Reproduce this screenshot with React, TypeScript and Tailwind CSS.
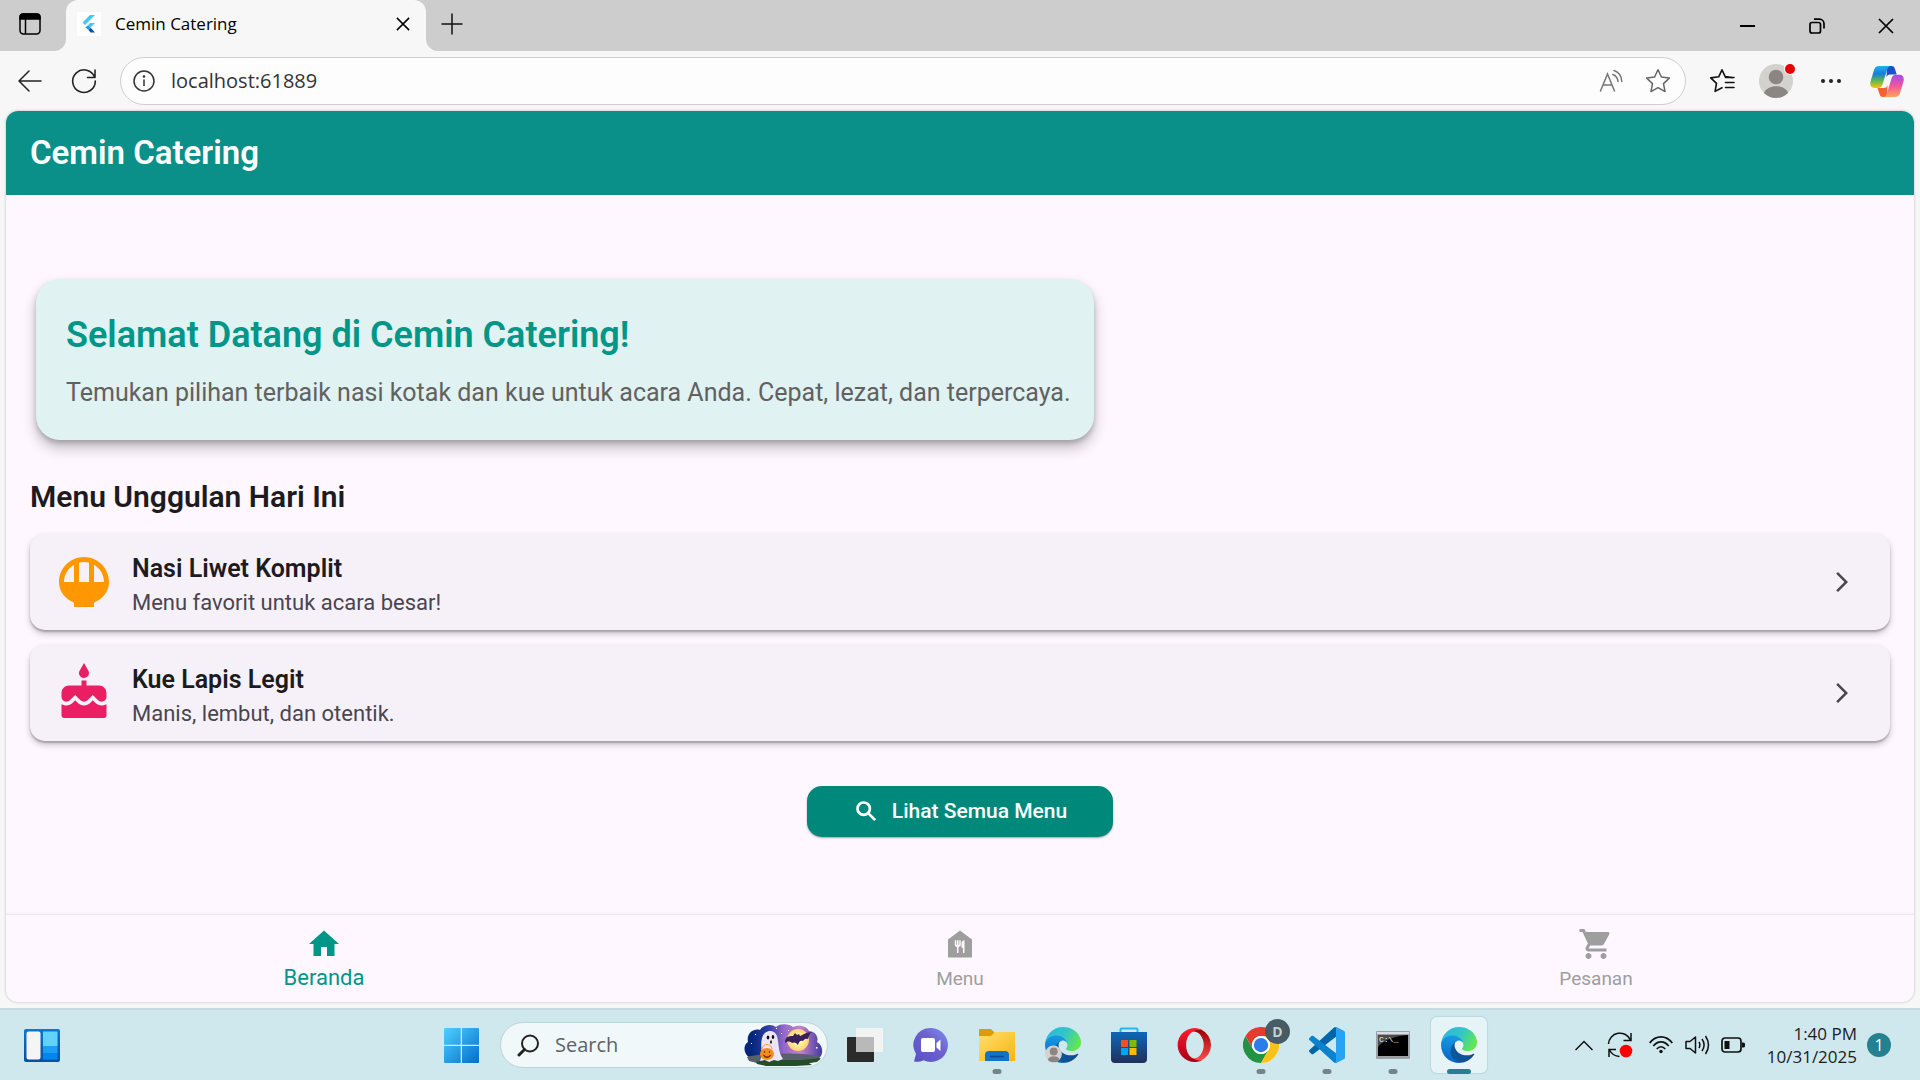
import type { ReactNode } from "react";
import {
  MdArrowForwardIos,
  MdCake,
  MdFoodBank,
  MdHome,
  MdRiceBowl,
  MdShoppingCart,
} from "react-icons/md";

const uiFont = "font-['Open_Sans','Noto_Sans',sans-serif]";

/* ---------- Browser icons ---------- */

function TabActionsIcon() {
  return (
    <svg width="24" height="24" viewBox="0 0 24 24" fill="none" stroke="#000" strokeWidth="1.5">
      <rect x="2" y="2" width="20" height="20" rx="3.5" />
      <path d="M2 7V5a3 3 0 0 1 3-3h14a3 3 0 0 1 3 3v2z" fill="#000" />
      <path d="M7.5 7v15" />
    </svg>
  );
}

function FlutterIcon() {
  return (
    <svg width="24" height="24" viewBox="0 0 24 24">
      <path fill="#fff" d="M0 0h24v24H0z" />
      <path fill="#47c5fb" d="M13 3h5L8 13l-2.500-2.500z" />
      <path fill="#47c5fb" d="M13 11h5l-4.500 4.500-2.500-2.300z" />
      <path fill="#2196e8" d="M11 13.200l2.500 2.300L11.500 18 8.500 15.500z" />
      <path fill="#00569e" d="M11.500 18l2.200-2.300L18 20.500h-4.500z" />
    </svg>
  );
}

function CrossIcon({ size }: { size: number }) {
  return (
    <svg width={size} height={size} viewBox="0 0 16 16" stroke="#000" strokeWidth="1.7" fill="none">
      <path d="M1 1l14 14M15 1L1 15" />
    </svg>
  );
}

function PlusIcon() {
  return (
    <svg width="22" height="22" viewBox="0 0 22 22" stroke="#111" strokeWidth="1.5" fill="none">
      <path d="M11 .5v21M.5 11h21" />
    </svg>
  );
}

function RestoreIcon() {
  return (
    <svg width="16" height="16" viewBox="0 0 16 16" stroke="#000" strokeWidth="1.700" fill="none">
      <rect x="1" y="4.500" width="10.500" height="10.500" rx="2" />
      <path d="M5 1.200h5.500a4.500 4.500 0 0 1 4.500 4.500V10.500" />
    </svg>
  );
}

function BackIcon() {
  return (
    <svg width="24" height="22" viewBox="0 0 24 22" stroke="#222" strokeWidth="1.500" fill="none" strokeLinecap="round" strokeLinejoin="round">
      <path d="M23 11H1M11 1L1 11l10 10" />
    </svg>
  );
}

function ReloadIcon() {
  return (
    <svg width="26" height="26" viewBox="0 0 26 26" stroke="#222" strokeWidth="1.600" fill="none" strokeLinecap="round" strokeLinejoin="round">
      <path d="M23.700 9.500A11.300 11.300 0 1 0 24.300 13M24 2v7.500h-7.500" />
    </svg>
  );
}

function InfoIcon() {
  return (
    <svg width="22" height="22" viewBox="0 0 22 22" stroke="#333" strokeWidth="1.500" fill="none">
      <circle cx="11" cy="11" r="10" />
      <path d="M11 9.500v6.500" />
      <circle cx="11" cy="6.500" r=".6" fill="#333" />
    </svg>
  );
}

function ReadAloudIcon() {
  return (
    <svg width="24" height="24" viewBox="0 0 24 24" stroke="#767676" strokeWidth="1.500" fill="none" strokeLinecap="round">
      <path d="M1.500 22L8.500 5l7 17M4 16h9M15 1.500c4.500 1.500 7.500 6 7.800 11M13.800 5.500c3 1 4.800 3.500 5.200 7" />
    </svg>
  );
}

function StarIcon() {
  return (
    <svg width="26" height="26" viewBox="0 0 26 26" stroke="#666" strokeWidth="1.500" fill="none" strokeLinejoin="round">
      <path d="M13 1.800l3.400 7.200 7.900 1.100-5.800 5.500 1.500 8L13 19.700l-7 3.900 1.500-8-5.800-5.500L9.600 9z" />
    </svg>
  );
}

function FavoritesIcon() {
  return (
    <svg width="26" height="26" viewBox="0 0 26 26" stroke="#111" strokeWidth="1.600" fill="none" strokeLinejoin="round" strokeLinecap="round">
      <path d="M23.500 9.600l-7.300-1L13 1.800 9.700 8.800l-8 1.100 5.800 5.500-1.400 8L13 19.700M16.500 9.500H25M16.500 14.500H25M16.500 19.500H25" />
    </svg>
  );
}

function CopilotIcon() {
  return (
    <svg width="34" height="31" viewBox="0 0 34 31">
      <defs>
        <linearGradient id="copL" x1="0" y1="0" x2="0" y2="1">
          <stop offset="0" stopColor="#1ab4f0" />
          <stop offset=".35" stopColor="#157fd6" />
          <stop offset=".7" stopColor="#6cb84a" />
          <stop offset="1" stopColor="#fdc600" />
        </linearGradient>
        <linearGradient id="copR" x1="0" y1="0" x2="0" y2="1">
          <stop offset="0" stopColor="#a349f0" />
          <stop offset=".5" stopColor="#f0569a" />
          <stop offset="1" stopColor="#ffa45c" />
        </linearGradient>
      </defs>
      <path fill="#1e4fd0" d="M17 0h4.500c2 0 3 1.200 3.500 3l1.700 5.500H20c-2 0-3 1-3.500 3z" />
      <path fill="#f4632f" d="M17 31h-4c-2 0-3-1.200-3.500-3L7.500 22H14c2 0 3-1 3.500-3z" />
      <path fill="url(#copL)" d="M9 0h12c-2.500 0-3.300 2-4 4l-4.500 14.500c-.7 2.300-1.800 3.500-4.500 3.500H4.500C1 22-.5 19 .5 15.500L4 4C4.800 1.300 6.300 0 9 0z" />
      <path fill="url(#copR)" d="M25 31H13c2.500 0 3.300-2 4-4l4.500-14.500C22.200 10.200 23.300 8.700 26 8.700h3.500C33 8.700 34.500 12 33.500 15.500L30 27c-.8 2.700-2.300 4-5 4z" />
    </svg>
  );
}

/* ---------- Taskbar icons ---------- */

function WidgetsIcon() {
  return (
    <svg width="36" height="33" viewBox="0 0 36 33">
      <defs>
        <linearGradient id="wid" x1="0" y1="0" x2="0" y2="1">
          <stop offset="0" stopColor="#0a79d0" />
          <stop offset="1" stopColor="#0b4ea2" />
        </linearGradient>
      </defs>
      <rect width="36" height="33" rx="2" fill="url(#wid)" />
      <rect x="2.500" y="2.500" width="14" height="28" rx="2" fill="#f5f5f5" />
      <path fill="#62d3ff" d="M19 2.500h14.500V17H19z" />
      <path fill="#1b9ff5" d="M19 17h14.500v7H19z" />
      <path fill="#0086f0" d="M19 24h14.500v6.500H19z" />
    </svg>
  );
}

function StartIcon() {
  return (
    <svg width="35" height="35" viewBox="0 0 35 35">
      <defs>
        <linearGradient id="win" x1="0" y1="0" x2="1" y2="1">
          <stop offset="0" stopColor="#4fd0ff" />
          <stop offset="1" stopColor="#006fcf" />
        </linearGradient>
      </defs>
      <path fill="url(#win)" d="M1 0h15.700v16.700H0V1a1 1 0 0 1 1-1zM18 0h16a1 1 0 0 1 1 1v15.700H18zM0 18h16.700v17H1a1 1 0 0 1-1-1zM18 18h17v16a1 1 0 0 1-1 1H18z" />
    </svg>
  );
}

function TaskSearchIcon() {
  return (
    <svg width="23" height="23" viewBox="0 0 23 23" stroke="#222" fill="none" strokeLinecap="round">
      <circle cx="13" cy="9.500" r="8" strokeWidth="2" />
      <path d="M7.500 15.500L2 21" strokeWidth="3" />
    </svg>
  );
}

function HalloweenArt() {
  return (
    <svg width="80" height="42" viewBox="0 0 80 42">
      <defs>
        <linearGradient id="sky" x1="0" y1="0" x2="1" y2="0">
          <stop offset=".1" stopColor="#04277c" />
          <stop offset=".3" stopColor="#2b3ea0" />
          <stop offset=".5" stopColor="#9166c8" />
          <stop offset=".72" stopColor="#c582ce" />
          <stop offset="1" stopColor="#3f3a9b" />
        </linearGradient>
        <radialGradient id="moon">
          <stop offset=".4" stopColor="#fff3a0" />
          <stop offset="1" stopColor="#ffcf70" />
        </radialGradient>
      </defs>
      <path fill="url(#sky)" d="M6 34C-1 30-1 21 4 18 2 9 10 4 16 6c4-6 12-6 16-3 5-4 13-3 17 0 8-3 14 0 16 4 6 0 10 6 8 11 6 3 7 12 2 16z" />
      <path fill="#56616a" d="M3 33c14-4 50-5 72-1l1 4-10 3H13L5 37z" />
      <path fill="#244d2c" d="M12 38l8-2h38l19-2-4 4-8 1 3 2-16 1H22l-9-2z" />
      <circle cx="54" cy="16" r="11" fill="url(#moon)" />
      <path fill="#38205f" d="M41 19c0-6 3-7 8-7l2-3 2 2 2-1 1 2c3-1 6-4 12-4-3 2-3 5-4 7-3-1-4 1-5 2-3-1-4 1-5 4-2-3-4-3-6-2-2-2-5-2-7 0z" />
      <path fill="#ece5fa" d="M16 37c3-8 0-15 2-23C20 6 30 4 33 12c2 7 1 16 6 23l-5 2-4-1-5 2-4-2z" />
      <ellipse cx="24" cy="13.500" rx="1.300" ry="1.900" fill="#111" />
      <ellipse cx="29" cy="13" rx="1.300" ry="1.900" fill="#111" />
      <ellipse cx="27" cy="18" rx="1" ry="1.700" fill="#222" />
      <path d="M18 25c1-6 9-6 10 0" stroke="#f79a2b" fill="none" />
      <ellipse cx="23" cy="30" rx="7" ry="6" fill="#f38a1d" />
      <path d="M20 28h1m4 0h1M19.500 31c2 3 5 3 7 0" stroke="#5c2500" strokeWidth="1.300" fill="none" />
      <path fill="#fff" d="M11 10h1v1h-1zM37 9h1v1h-1zM72 23h1.500v1.500H72zM32 4h1v1h-1zM7 19h1v1H7zM44 6h1v1h-1z" />
    </svg>
  );
}

function TaskViewIcon() {
  return (
    <svg width="36" height="36" viewBox="0 0 36 36">
      <rect y="10" width="27" height="25" rx="1" fill="#2b2b2b" />
      <rect x="9" y="1" width="27" height="24" rx="1" fill="#f3f3f3" />
      <path fill="#b9b9b9" d="M9 10h18v15H9z" />
    </svg>
  );
}

function ChatIcon() {
  return (
    <svg width="36" height="36" viewBox="0 0 36 36">
      <defs>
        <linearGradient id="chat" x1="0" y1="1" x2="1" y2="0">
          <stop offset="0" stopColor="#5a50c4" />
          <stop offset=".6" stopColor="#6f62cf" />
          <stop offset="1" stopColor="#7b93f0" />
        </linearGradient>
      </defs>
      <path fill="url(#chat)" d="M18 1a17 17 0 1 1-7.500 32.300C7 35 4 35 1 34.500L3 27A17 17 0 0 1 18 1z" />
      <rect x="8" y="11" width="14" height="14" rx="2" fill="#fff" />
      <path fill="#fff" d="M23.500 16l4-3.500V24l-4-3.500z" />
    </svg>
  );
}

function FolderIcon() {
  return (
    <svg width="36" height="36" viewBox="0 0 36 36">
      <defs>
        <linearGradient id="fold" x1="0" y1="0" x2="1" y2="1">
          <stop offset="0" stopColor="#ffdf70" />
          <stop offset="1" stopColor="#fbb50f" />
        </linearGradient>
      </defs>
      <path fill="#dd9b09" d="M1 2h11l4 4v3H0V3a1 1 0 0 1 1-1z" />
      <path fill="url(#fold)" d="M0 9h12l4-4h19a1 1 0 0 1 1 1v28H0z" />
      <path fill="#1273c8" d="M6 34V28a4 4 0 0 1 4-4h16a4 4 0 0 1 4 4v6z" />
      <path d="M11 29.500h14" stroke="#0a4a96" strokeWidth="1.500" />
    </svg>
  );
}

function EdgeIcon({ id, avatar }: { id: string; avatar?: boolean }) {
  return (
    <svg width="36" height="36" viewBox="0 0 256 256">
      <defs>
        <linearGradient id={id + "a"} x1="0" y1=".5" x2="1" y2=".5">
          <stop offset="0" stopColor="#0c59a4" />
          <stop offset="1" stopColor="#114a8b" />
        </linearGradient>
        <linearGradient id={id + "b"} x1=".6" y1="0" x2=".4" y2="1">
          <stop offset="0" stopColor="#1b9de2" />
          <stop offset=".5" stopColor="#0d84d9" />
          <stop offset="1" stopColor="#0b63bb" />
        </linearGradient>
        <linearGradient id={id + "c"} x1="0" y1=".2" x2="1" y2=".6">
          <stop offset="0" stopColor="#30b6e0" />
          <stop offset=".5" stopColor="#31c5c8" />
          <stop offset="1" stopColor="#66e84c" />
        </linearGradient>
      </defs>
      <g transform="translate(-4.6 -4.9)">
        <path fill={`url(#${id}a)`} d="M235.680,195.460a93.730,93.730,0,0,1-10.540,4.710,101.870,101.870,0,0,1-35.900,6.460c-47.320,0-88.540-32.550-88.540-74.320A31.480,31.480,0,0,1,117.130,105c-42.800,1.800-53.800,46.400-53.800,72.530,0,73.880,68.090,81.370,82.760,81.370,7.910,0,19.840-2.300,27-4.560l1.310-.44A128.340,128.340,0,0,0,241,201.100a4,4,0,0,0-5.320-5.640Z" />
        <path fill={`url(#${id}b)`} d="M110.340,246.340A79.200,79.200,0,0,1,87.600,225a80.720,80.720,0,0,1,29.530-120c3.120-1.470,8.450-4.130,15.540-4a32.350,32.350,0,0,1,25.690,13,31.880,31.880,0,0,1,6.360,18.660c0-.21,24.460-79.600-80-79.600-43.900,0-80,41.660-80,78.210a130.150,130.150,0,0,0,12.110,56,128,128,0,0,0,156.380,67.110,75.550,75.550,0,0,1-62.780-8Z" />
        <path fill={`url(#${id}c)`} d="M156.940,153.780c-.81,1.050-3.300,2.500-3.300,5.660,0,2.610,1.700,5.120,4.720,7.230,14.380,10,41.490,8.680,41.560,8.680a59.560,59.560,0,0,0,30.270-8.350A61.380,61.380,0,0,0,260.640,114.140c.26-22.410-8-37.310-11.340-43.910C228.100,28.760,182.350,4.920,132.630,4.920A128,128,0,0,0,4.630,131.120c.48-36.540,36.800-66.050,80-66.050,3.500,0,23.460.34,42,10.070,16.340,8.580,24.900,18.940,30.850,29.210,6.180,10.670,7.280,24.150,7.280,29.520S162,147.200,156.940,153.780Z" />
      </g>
      {avatar && (
        <g>
          <circle cx="60" cy="192" r="60" fill="#d4d2d0" />
          <circle cx="62" cy="174" r="28" fill="#8b8683" />
          <path d="M20 232c10-32 74-32 84 0-20 26-64 26-84 0z" fill="#8b8683" />
        </g>
      )}
    </svg>
  );
}

function StoreIcon() {
  return (
    <svg width="36" height="36" viewBox="0 0 36 36">
      <defs>
        <linearGradient id="store" x1="0" y1="0" x2="0" y2="1">
          <stop offset="0" stopColor="#0e68b8" />
          <stop offset="1" stopColor="#20305c" />
        </linearGradient>
      </defs>
      <path d="M9.500 8V2.500a1 1 0 0 1 1-1h15a1 1 0 0 1 1 1V8" stroke="#22b9f0" strokeWidth="2" fill="none" />
      <path fill="url(#store)" d="M0 5h36v27a4 4 0 0 1-4 4H4a4 4 0 0 1-4-4z" />
      <path fill="#f25022" d="M10 13h7v7h-7z" />
      <path fill="#7fba00" d="M18.500 13h7v7h-7z" />
      <path fill="#00a4ef" d="M10 21h7v7h-7z" />
      <path fill="#ffb900" d="M18.500 21h7v7h-7z" />
    </svg>
  );
}

function OperaIcon() {
  return (
    <svg width="36" height="36" viewBox="0 0 36 36">
      <defs>
        <linearGradient id="opA" x1="0" y1="0" x2="0" y2="1">
          <stop offset="0" stopColor="#ff1b2d" />
          <stop offset="1" stopColor="#a70014" />
        </linearGradient>
        <linearGradient id="opB" x1="0" y1="0" x2="0" y2="1">
          <stop offset="0" stopColor="#9c0000" />
          <stop offset="1" stopColor="#ff4b4b" />
        </linearGradient>
      </defs>
      <path fill="url(#opB)" d="M12 6c3-3 8-4 12-3.500A17 17 0 0 1 24 33.500c-5 1-9 0-12-3.500 3 2 8 2 11-1.500 5-6 5-15 0-21C20 4 15 3.500 12 6z" />
      <path fill="url(#opA)" fillRule="evenodd" d="M18 1a17 17 0 1 0 8.500 31.500c-3 1.500-7 1-9.500-.5C6.500 28 6.500 8 17 4c3-1.500 7-1.500 9.500-.5A17 17 0 0 0 18 1z" />
    </svg>
  );
}

function ChromeIcon() {
  return (
    <svg width="36" height="36" viewBox="0 0 48 48">
      <circle cx="24" cy="24" r="24" fill="#fff" />
      <path fill="#e33b2e" d="M3.200 12A24 24 0 0 1 44.800 12H24a12 12 0 0 0-10.400 18z" />
      <path fill="#229342" d="M3.200 12l10.400 18A12 12 0 0 0 34.400 30L24 48A24 24 0 0 1 3.200 12z" />
      <path fill="#fbc116" d="M44.800 12A24 24 0 0 1 24 48l10.400-18A12 12 0 0 0 24 12z" />
      <circle cx="24" cy="24" r="12" fill="#fff" />
      <circle cx="24" cy="24" r="9.500" fill="#2b7de9" />
    </svg>
  );
}

function CodeIcon() {
  return (
    <svg width="36" height="36" viewBox="0 0 100 100">
      <path fill="#0065a9" d="M96.460 10.800L75.860.880C73.470-.270 70.620.210 68.750 2.080L1.300 63.580C-.520 65.240-.510 68.090 1.300 69.750L6.810 74.750C8.300 76.100 10.530 76.200 12.130 74.990L93.360 13.370C96.090 11.300 100 13.250 100 16.670V16.430C100 14.030 98.620 11.840 96.460 10.800Z" />
      <path fill="#0a82cc" d="M96.460 89.200L75.860 99.120C73.470 100.270 70.620 99.790 68.750 97.920L1.300 36.420C-.520 34.760-.510 31.910 1.300 30.250L6.810 25.250C8.300 23.900 10.530 23.800 12.130 25.010L93.360 86.630C96.090 88.700 100 86.750 100 83.330V83.570C100 85.970 98.620 88.160 96.460 89.200Z" />
      <path fill="#27a3f3" d="M75.860 99.130C73.470 100.270 70.620 99.790 68.750 97.920C71.060 100.220 75 98.590 75 95.330V4.670C75 1.410 71.060-.220 68.750 2.080C70.620.210 73.470-.270 75.860.870L96.460 10.780C98.620 11.820 100 14.010 100 16.410V83.590C100 85.990 98.620 88.180 96.460 89.220Z" />
    </svg>
  );
}

function TerminalIcon() {
  return (
    <svg width="36" height="36" viewBox="0 0 36 36">
      <rect x="1" y="4" width="34" height="28" rx="1" fill="#9aa0a6" />
      <path fill="#d9dde0" d="M2 5h32v2H2z" />
      <path fill="#000" d="M3 8h30v21H3z" />
      <path fill="#4a4a4a" d="M3 8h30C20 9 8 13 3 20z" />
      <text x="4" y="15" fill="#fff" fontSize="8" fontFamily="Liberation Mono, monospace">C:\_</text>
    </svg>
  );
}

function ChevronUpIcon() {
  return (
    <svg width="18" height="11" viewBox="0 0 18 11" stroke="#111" strokeWidth="1.500" fill="none">
      <path d="M.500 10L9 1.500l8.500 8.500" />
    </svg>
  );
}

function SyncIcon() {
  return (
    <svg width="26" height="26" viewBox="0 0 26 26" stroke="#111" strokeWidth="1.500" fill="none">
      <path d="M1.500 12A11.500 11.500 0 0 1 23.500 8M24 1v7.500h-7.500M2 25v-7.500h7M2.500 18a12 12 0 0 0 10 6.500" />
      <circle cx="19" cy="19" r="6.300" fill="#f00" stroke="none" />
    </svg>
  );
}

function WifiIcon() {
  return (
    <svg width="24" height="20" viewBox="0 0 24 20" stroke="#111" strokeWidth="1.700" fill="none">
      <path d="M.700 8C7-.200 17-.200 23.300 8M4.300 11c4.500-5.500 11-5.500 15.400 0M7.800 14c2.400-3 6-3 8.400 0" />
      <circle cx="12" cy="16.500" r="1.700" fill="#111" stroke="none" />
    </svg>
  );
}

function VolumeIcon() {
  return (
    <svg width="25" height="22" viewBox="0 0 25 22" stroke="#111" strokeWidth="1.500" fill="none" strokeLinejoin="round">
      <path d="M1 7.500h4L10.500 3v16L5 14.500H1zM14 8c1.200 2 1.200 4 0 6M17 5c2.800 4 2.800 8 0 12M20.500 2c4 6 4 12 0 18" />
    </svg>
  );
}

function BatteryIcon() {
  return (
    <svg width="24" height="16" viewBox="0 0 24 16">
      <rect x="1" y="1" width="19" height="14" rx="3" stroke="#111" strokeWidth="1.700" fill="none" />
      <path fill="#111" d="M3.500 4h5v8h-5zM21 5.500h1.500a1.500 1.500 0 0 1 1.500 1.500v2a1.500 1.500 0 0 1-1.500 1.500H21z" />
    </svg>
  );
}

/* ---------- Browser ---------- */

function TabStrip() {
  return (
    <div className="flex h-[51px] items-stretch bg-[#cdcdcd]">
      <div className="flex w-[66px] bg-[#f7f7f7]">
        <button aria-label="Menu tindakan tab" className="flex flex-1 items-center justify-center rounded-br-xl bg-[#cdcdcd] pr-1.5 pb-1">
          <TabActionsIcon />
        </button>
      </div>
      <div className="bg-[#cdcdcd]">
        <div className="flex h-full w-[360px] items-center rounded-t-xl bg-[#f7f7f7] pr-4 pb-[3px] pl-[11px]">
          <FlutterIcon />
          <span className="ml-[14px] flex-1 text-[17px] text-black">Cemin Catering</span>
          <button aria-label="Tutup tab">
            <CrossIcon size={14} />
          </button>
        </div>
      </div>
      <div className="flex flex-1 bg-[#f7f7f7]">
        <div className="flex flex-1 items-center rounded-bl-xl bg-[#cdcdcd] pl-[15px]">
          <button aria-label="Tab baru" className="pb-1">
            <PlusIcon />
          </button>
          <div className="ml-auto flex">
            <button aria-label="Kecilkan" className="flex h-[51px] w-[69px] items-center justify-center">
              <span className="h-0.5 w-[15px] bg-black" />
            </button>
            <button aria-label="Pulihkan" className="flex h-[51px] w-[69px] items-center justify-center">
              <RestoreIcon />
            </button>
            <button aria-label="Tutup" className="flex h-[51px] w-[69px] items-center justify-center">
              <CrossIcon size={16} />
            </button>
          </div>
        </div>
      </div>
    </div>
  );
}

function Toolbar() {
  return (
    <div className="flex h-[60px] items-center bg-[#f7f7f7] pr-4 pl-[18px]">
      <button aria-label="Kembali">
        <BackIcon />
      </button>
      <button aria-label="Muat ulang" className="ml-[29px]">
        <ReloadIcon />
      </button>
      <div className="ml-[23px] flex h-12 flex-1 items-center rounded-full border border-[#cfcfcf] bg-[#fdfdfd] pr-[14px] pl-3">
        <InfoIcon />
        <input
          aria-label="Alamat"
          defaultValue="localhost:61889"
          className="ml-4 min-w-0 flex-1 bg-transparent text-xl text-[#333] outline-none"
        />
        <button aria-label="Baca nyaring">
          <ReadAloudIcon />
        </button>
        <button aria-label="Tambah favorit" className="ml-[22px]">
          <StarIcon />
        </button>
      </div>
      <button aria-label="Favorit" className="ml-[23px]">
        <FavoritesIcon />
      </button>
      <button aria-label="Profil" className="relative ml-6 size-[34px]">
        <svg width="34" height="34" viewBox="0 0 34 34">
          <circle cx="17" cy="17" r="17" fill="#d4d2cf" />
          <circle cx="17" cy="13" r="7.300" fill="#8b8683" />
          <path d="M5 29c3-9 21-9 24 0a17 17 0 0 1-24 0z" fill="#8b8683" />
        </svg>
        <span className="absolute top-0 -right-0.5 size-[10px] rounded-full bg-[#e60000] ring-1 ring-[#f7f7f7]" />
      </button>
      <button aria-label="Lainnya" className="ml-7 flex items-center gap-1">
        <span className="size-1 rounded-full bg-[#222]" />
        <span className="size-1 rounded-full bg-[#222]" />
        <span className="size-1 rounded-full bg-[#222]" />
      </button>
      <button aria-label="Copilot" className="ml-[29px]">
        <CopilotIcon />
      </button>
    </div>
  );
}

/* ---------- Catering page ---------- */

function BoldSearchIcon() {
  return (
    <svg width="27" height="27" viewBox="0 0 24 24" fill="none" stroke="#fff" strokeWidth="2.400">
      <circle cx="9.500" cy="9.500" r="5.500" />
      <path d="M13.700 13.700l6 6" />
    </svg>
  );
}

function MenuCard({ icon, title, subtitle }: { icon: ReactNode; title: string; subtitle: string }) {
  return (
    <button className="flex h-[97px] w-full items-center rounded-[15px] bg-[#f6f1f9] pr-9 pl-6 text-left shadow-[0_2px_2px_rgba(0,0,0,0.22),0_4px_6px_rgba(0,0,0,0.2)]">
      {icon}
      <span className="ml-[18px] flex flex-1 flex-col pt-1.5">
        <span className="text-[25px] leading-9 font-semibold text-[#1d1b20]">{title}</span>
        <span className="text-[22px] leading-8 text-[#49454f]">{subtitle}</span>
      </span>
      <MdArrowForwardIos size={24} className="text-[#49454f]" />
    </button>
  );
}

function NavItem({ icon, label, active }: { icon: ReactNode; label: string; active?: boolean }) {
  return (
    <a
      href="#"
      aria-current={active ? "page" : undefined}
      className={
        active
          ? "flex flex-1 flex-col items-center gap-0.5 text-[22px] leading-7 text-[#009688]"
          : "flex flex-1 flex-col items-center gap-[3px] text-[19px] leading-7 text-[#9e9e9e]"
      }
    >
      {icon}
      <span>{label}</span>
    </a>
  );
}

function CateringPage() {
  return (
    <div className="mx-1.5 mb-1.5 flex flex-1 flex-col overflow-hidden rounded-xl bg-[#fef7ff] font-[Roboto,sans-serif] shadow-[0_0_2px_1px_rgba(0,0,0,0.12)]">
      <header className="flex h-[84px] items-center bg-[#0a9088] px-6">
        <h1 className="text-[33px] font-semibold text-white">Cemin Catering</h1>
      </header>
      <main className="flex flex-1 flex-col px-6 pt-[84px]">
        <section className="ml-1.5 flex w-[1058px] max-w-full flex-col gap-4 rounded-3xl bg-[#e0f2f1] pt-8 pr-4 pb-[29px] pl-[30px] shadow-[0_3px_5px_rgba(0,0,0,0.18),0_8px_14px_rgba(0,0,0,0.24)]">
          <h2 className="text-4xl leading-12 font-semibold text-[#009688]">Selamat Datang di Cemin Catering!</h2>
          <p className="text-[25px] leading-9 text-[#616161]">
            Temukan pilihan terbaik nasi kotak dan kue untuk acara Anda. Cepat, lezat, dan terpercaya.
          </p>
        </section>
        <h2 className="mt-[37px] mb-4 text-[30px] leading-10 font-semibold text-[#1d1b20]">Menu Unggulan Hari Ini</h2>
        <div className="flex flex-col gap-[14px]">
          <MenuCard
            icon={<MdRiceBowl size={60} className="text-[#ff9800]" />}
            title="Nasi Liwet Komplit"
            subtitle="Menu favorit untuk acara besar!"
          />
          <MenuCard
            icon={<MdCake size={60} className="text-[#e91e63]" />}
            title="Kue Lapis Legit"
            subtitle="Manis, lembut, dan otentik."
          />
        </div>
        <button className="mt-[45px] flex h-[51px] items-center gap-3 self-center rounded-[15px] bg-[#00897b] px-[46px] text-[21px] font-medium text-white shadow-[0_1px_2px_rgba(0,0,0,0.35)]">
          <BoldSearchIcon />
          Lihat Semua Menu
        </button>
      </main>
      <nav className="flex h-[88px] border-t border-[#f0e9f2] pt-[11px] shadow-[0_-1px_3px_rgba(0,0,0,0.04)]">
        <NavItem active icon={<MdHome size={36} />} label="Beranda" />
        <NavItem icon={<MdFoodBank size={36} />} label="Menu" />
        <NavItem icon={<MdShoppingCart size={36} />} label="Pesanan" />
      </nav>
    </div>
  );
}

/* ---------- Taskbar ---------- */

function TaskButton({ label, icon, running, active }: { label: string; icon: ReactNode; running?: boolean; active?: boolean }) {
  return (
    <div className="flex w-[66px] items-center justify-center">
      <button
        aria-label={label}
        className={
          active
            ? "relative flex h-14 w-14 items-center justify-center rounded-md bg-[#e6f3f7] shadow-[0_0_1px_1px_rgba(120,170,180,0.25)]"
            : "relative flex h-14 w-14 items-center justify-center"
        }
      >
        {icon}
        {running && <span className="absolute -bottom-px left-1/2 h-[5px] w-[9px] -translate-x-1/2 rounded-full bg-[#74858a]" />}
        {active && <span className="absolute -bottom-px left-1/2 h-[5px] w-6 -translate-x-1/2 rounded-full bg-[#25808f]" />}
      </button>
    </div>
  );
}

function Taskbar() {
  return (
    <footer className="grid h-[72px] grid-cols-[1fr_auto_1fr] border-t-2 border-[#c3dbe1] bg-[#cfe8ee] text-[#1b1b1b]">
      <div className="flex items-center pl-6">
        <button aria-label="Widget">
          <WidgetsIcon />
        </button>
      </div>
      <div className="flex">
        <TaskButton label="Mulai" icon={<StartIcon />} />
        <label className="mr-1 ml-1.5 flex h-[46px] w-[328px] items-center self-center overflow-hidden rounded-full border border-[#bcd3d9] bg-[#f0f8fa] pl-4">
          <TaskSearchIcon />
          <input
            aria-label="Search"
            placeholder="Search"
            className="ml-[15px] min-w-0 flex-1 bg-transparent text-xl text-[#333] outline-none placeholder:text-[#5d6366]"
          />
          <span className="mr-[3px]">
            <HalloweenArt />
          </span>
        </label>
        <TaskButton label="Tampilan tugas" icon={<TaskViewIcon />} />
        <TaskButton label="Obrolan" icon={<ChatIcon />} />
        <TaskButton label="File Explorer" icon={<FolderIcon />} running />
        <TaskButton label="Edge profil" icon={<EdgeIcon id="edgeProfile" avatar />} />
        <TaskButton label="Microsoft Store" icon={<StoreIcon />} />
        <TaskButton label="Opera" icon={<OperaIcon />} />
        <TaskButton
          label="Chrome"
          icon={
            <>
              <ChromeIcon />
              <span className="absolute top-0.5 -right-px flex size-[25px] items-center justify-center rounded-full bg-[#475b65] text-sm font-bold text-[#c5d0d5]">
                D
              </span>
            </>
          }
          running
        />
        <TaskButton label="Visual Studio Code" icon={<CodeIcon />} running />
        <TaskButton label="Command Prompt" icon={<TerminalIcon />} running />
        <TaskButton label="Microsoft Edge" icon={<EdgeIcon id="edge" />} active />
      </div>
      <div className="flex items-center justify-end pr-[29px]">
        <button aria-label="Ikon tersembunyi">
          <ChevronUpIcon />
        </button>
        <button aria-label="Pembaruan" className="ml-[14px]">
          <SyncIcon />
        </button>
        <button aria-label="Wi-Fi" className="ml-4">
          <WifiIcon />
        </button>
        <button aria-label="Volume" className="ml-3">
          <VolumeIcon />
        </button>
        <button aria-label="Baterai" className="ml-[11px]">
          <BatteryIcon />
        </button>
        <div className="ml-[22px] text-right text-[17px] leading-[23px]">
          <div>1:40 PM</div>
          <div>10/31/2025</div>
        </div>
        <button aria-label="Notifikasi" className="ml-2.5 flex size-6 items-center justify-center rounded-full bg-[#25808f] text-base text-white">
          1
        </button>
      </div>
    </footer>
  );
}

export default function App() {
  return (
    <div className={`flex min-h-screen flex-col bg-[#f7f7f7] ${uiFont}`}>
      <TabStrip />
      <Toolbar />
      <CateringPage />
      <Taskbar />
    </div>
  );
}
